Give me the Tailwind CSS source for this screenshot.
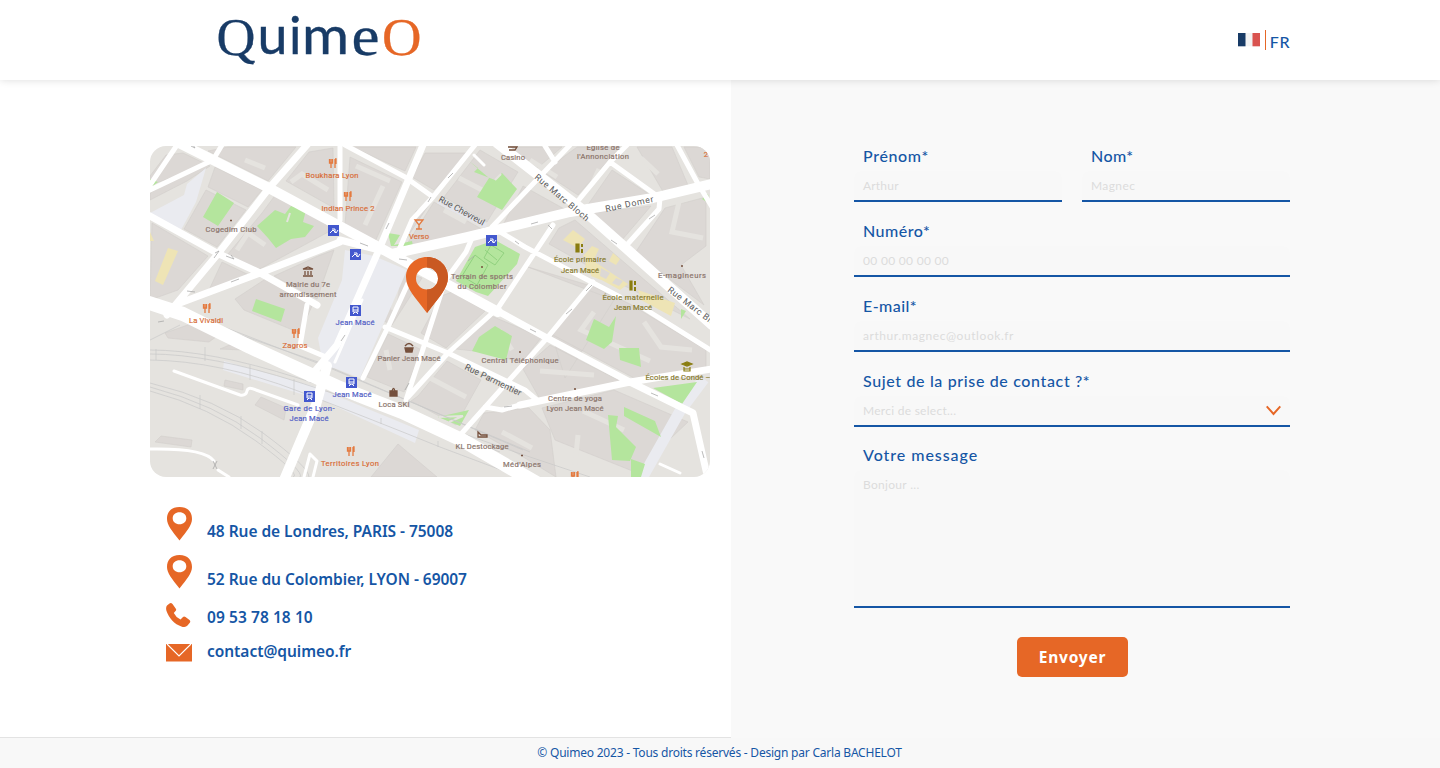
<!DOCTYPE html>
<html lang="fr">
<head>
<meta charset="utf-8">
<title>Quimeo - Contact</title>
<script src="https://cdn.jsdelivr.net/npm/@tailwindcss/browser@4"></script>
</head>
<body class="flex h-[768px] w-[1440px] flex-col overflow-hidden bg-white text-[#1556a5]">
<header class="relative z-10 flex h-20 shrink-0 justify-between bg-white pr-[150px] pl-[210px] shadow-[0_0_8px_rgba(0,0,0,0.14)]">
  <svg class="h-20 w-[220px]" viewBox="210 0 220 80" fill="#183b66" aria-label="QuimeO">
    <g font-family="'Liberation Serif',serif">
      <text x="216.500" y="54.500" font-size="53" textLength="39" lengthAdjust="spacingAndGlyphs" stroke="#183b66" stroke-width=".3">Q</text>
      <text x="351.500" y="54.500" font-size="57" textLength="28" lengthAdjust="spacingAndGlyphs" stroke="#183b66" stroke-width=".3">e</text>
      <text x="382" y="54.500" font-size="53" textLength="39.500" lengthAdjust="spacingAndGlyphs" fill="#e66726" stroke="#e66726" stroke-width=".3">O</text>
    </g>
    <path fill="none" stroke="#183b66" stroke-width="1.600" stroke-linecap="round" d="M243 59.500Q247 63.300 253 63.600"/>
    <g font-family="Lato,sans-serif" font-size="52" stroke="#183b66" stroke-width=".4">
      <text x="257.500" y="54" textLength="30" lengthAdjust="spacingAndGlyphs">u</text>
      <text x="289" y="54">i</text>
      <text x="302" y="54" textLength="47" lengthAdjust="spacingAndGlyphs">m</text>
    </g>
  </svg>
  <div class="flex items-start pt-[30px]">
    <svg class="mt-[3px] h-[14px] w-[22px]" viewBox="0 0 22 14"><rect width="22" height="13.300" fill="#f3f3f3"/><rect width="7.500" height="13.300" fill="#183b66"/><rect x="14.500" width="7.500" height="13.300" fill="#d9534f"/></svg>
    <span class="ml-[5px] h-5 w-px bg-[#e66726]"></span>
    <span class="ml-1 pt-[2px] font-['Lato',sans-serif] text-base leading-5 font-medium tracking-[0.5px]">FR</span>
  </div>
</header>

<main class="grid min-h-0 flex-1 grid-cols-[731px_1fr]">
  <section class="border-b border-[#e3e3e3] pt-[66px] pl-[150px]">
    <svg class="block h-[331px] w-[560px] rounded-2xl" viewBox="150 146 560 331" fill="none">
      <rect x="150" y="146" width="560" height="331" fill="#e5e3df"/>
      <!-- building blocks -->
      <g fill="#dcd8d5" stroke="#d2cecb" stroke-width=".6">
        <path d="M183 153L210 166L187 181L150 200V193L177 176L150 185V176L166 155ZM228 147H296L268 181L208 151ZM215 167L262 190L248 207L208 187ZM206 190L246 210L217 247L184 229ZM279 190L332 218V230L258 270L228 254L262 213ZM286 181L309 152L333 148L334 208ZM152 223L208 256L178 290L150 300ZM222 262L249 275L209 290ZM267 278L312 306L300 333L244 310L235 299ZM318 256L334 250L317 299L274 276Z"/>
        <path d="M350 157L402 182L374 244L345 225ZM352 147H416L405 171ZM425 153H469L434 190L412 177ZM434 202L485 231L405 247ZM416 211L430 203L400 248ZM480 150L518 172L487 222L444 197ZM505 147H562L534 171ZM523 186L568 211L501 229ZM577 147H620L578 195L543 172ZM612 170L652 196L585 209ZM637 147H672L690 190L665 195ZM684 147H710V179L699 177ZM591 213L651 206L622 240ZM665 208L706 197V246L681 265L704 305L635 253Z"/>
        <path d="M559 228L575 220L690 319L617 282L549 244ZM528 267L614 300L565 378L551 332L588 285ZM405 272L422 278L392 325L382 320ZM452 292L485 311L446 348L421 333L441 296ZM388 334L422 350L404 392L367 377ZM418 396L447 361L481 380L456 425L411 401ZM489 315L520 328L541 338L521 363L492 353L456 349ZM561 321L592 286L630 304L706 350V369L634 378L551 334ZM523 369L550 345L622 382L541 401ZM542 408L614 390L688 422L635 472L555 440ZM529 408L550 430L556 477L520 455L475 430L484 413ZM165 333L199 321L224 331L209 342L168 338ZM232 344L243 350L220 349ZM225 380L243 384V390L224 386ZM261 397L286 408L284 420L255 405ZM155 442L161 436L192 440L191 447ZM371 477L398 444L437 477Z"/>
      </g>
      <g stroke="#e5e3df" stroke-width="5">
        <path d="M245 160L265 168M285 198L320 216M291 182L302 174L328 190M237 250L248 233L265 245M356 166L390 181M365 225L383 186M459 178L484 191M444 210L466 222M530 160L557 177M599 169L588 193M641 158L658 174M679 202L672 232L703 238M386 350L390 370M430 378L466 397M499 330L512 350M594 312L581 330L650 361M644 322L661 347L692 350M583 411L624 430M578 435L575 465M502 432L532 448M540 371L594 375M397 284L393 310"/>
      </g>
      <g fill="#eaebf0">
        <path d="M206 168L187 184L184 195L150 213L181 230L196 202ZM345 250L374 256L407 270L360 378L334 368L324 370L318 338L342 280ZM224 361L316 387L356 404L419 430L415 443L324 401L223 370Z"/>
        <path d="M704 379L680 411L641 480" stroke="#eaebf0" stroke-width="11"/>
      </g>
      <!-- parks -->
      <g fill="#b4e59d">
        <path d="M217 192L234 203L218 226L203 217ZM257 226L275 210L285 214L291 206L306 210L303 222L314 226L305 237L291 239L276 248L268 238ZM150 179L158 182L150 188ZM256 299L285 309L281 322L252 311ZM469 161L478 168L474 172L495 180L502 173L517 189L502 210L477 197L489 178ZM475 247L495 240L520 254L517 264L488 296L476 292L456 281ZM495 326L512 336L506 360L472 351L479 337ZM438 417L469 410L460 426ZM594 319L609 327L616 316L612 342L604 349L586 340ZM619 348L639 348L641 367L620 360ZM653 388L697 382L682 404ZM624 407L655 421L661 437L624 416ZM608 415L618 416L616 427L636 447L630 461L612 460ZM631 459L645 464L641 477H631ZM388 233L400 235L394 245L412 241L413 246L391 246Z"/>
        <path d="M686 311L681 319L681 309ZM708 194L702 199L710 204Z"/>
      </g>
      <path d="M475 255L488 265L477 285L462 276ZM491 245L504 253L495 265L484 258ZM485 250L497 260" stroke="#91d17f"/>
      <path d="M290 213L287 222M501 174L495 180M439 417L463 416L449 422" stroke="#e5e3df" stroke-width="2"/>
      <path d="M168 248L178 251L163 285L155 281ZM150 232L154 241H150ZM573 230L585 239L578 248L563 240ZM592 246L599 249L593 261L583 256ZM613 253L620 259L616 265L609 261ZM586 256L628 284L620 290L585 271ZM638 290L675 303L671 316L641 300ZM594 266L604 270L601 280L591 276Z" fill="#eee4b5"/>
      <path d="M601 268L610 273L606 279L600 276ZM616 278L623 281L619 286L612 283Z" fill="#dcd8d5"/>
      <!-- railway tracks -->
      <g stroke="#c9c9c9" stroke-width=".7">
        <path d="M150 350Q210 350 298 378T515 452L590 477M150 354Q210 354 298 382T500 452M150 360Q220 361 298 391T440 447L520 477M150 387Q215 404 260 438T300 477M150 391Q210 407 256 441T293 477M150 383Q217 399 263 433T309 477M160 307L318 362L523 450M167 305L325 366L530 452M150 340L180 325"/>
        <path d="M205 347V361M250 365V380M294 379V395M156 349V360M200 395V409M241 416V429M262 431V444M381 418V424M438 441V447"/>
      </g>
      <!-- streets -->
      <g stroke="#fff" stroke-linejoin="round" stroke-linecap="round">
        <path stroke-width="5" d="M150 190L213 160L222 145M150 185L177 145M340 145V220M433 197L412 220L398 252M475 145L433 197M345 145L405 177L433 197M492 227L525 247L620 297M645 309L712 351M570 145L492 227M553 225L498 308L448 353L408 397M472 238L466 252L445 281L425 343L406 400M415 268L388 327L363 378M385 327L448 353L525 390L537 400M593 282L547 338L462 433M485 407L502 410L520 405M677 145L697 182L712 207M627 145L610 162L660 198L659 209L625 247M610 162L577 202M307 305L300 346L326 357M545 146L555 162"/>
        <path stroke-width="3" d="M174 371L240 395Q246 396 247 391T256 390L298 405M150 449Q205 448 214 461M218 470L229 477M304 477L310 454L317 461L313 477M660 464L680 473M362 300L335 362M474 155L484 165"/>
        <path stroke-width="7" d="M307 145L270 187L217 255L167 315M150 216L217 253L260 273L317 305M340 242L260 273L180 303M340 240L395 254M423 145L378 252L337 345L309 378M492 308L547 338L630 382L693 413L707 475M520 405L630 382L712 369"/>
        <path stroke-width="10" d="M179 143L267 187L395 256L498 312M497 143L583 210L637 258L712 325M392 254L468 237L570 212L653 198L712 184M327 366L316 405L301 440L284 480"/>
        <path stroke-width="14" d="M140 300L183 314L250 347L340 388L402 412L462 440L540 485"/>
      </g>
      <path d="M438 201L486 226" stroke="#e4e5eb" stroke-width="5"/>
      <g stroke="#aaa" stroke-width=".8">
        <path d="M191 146L195 148L193 145M214 258L219 251L215 253M226 256L234 259L231 255M231 282L239 279M187 291L195 292M428 202L431 197M448 178L453 173M386 229L389 223M368 246L360 243M407 260L399 259M468 261L474 256M515 241L519 244M531 224L538 222M548 225L552 229M611 240L617 244M649 219L655 215M586 291L592 285M566 314L572 309M530 329L536 332M651 393L658 396M702 451L704 458M504 407L512 406M405 390L409 383M341 341L345 335M158 322L164 321M213 461L217 469M217 461L213 469"/>
      </g>
      <!-- place icons -->
      <g fill="#4358ce"><path d="M328 225H339V236H328ZM350 249H361V260H350ZM486 235H497V246H486ZM350 305H361V316H350ZM346 377H357V388H346ZM304 391H315V402H304Z"/></g>
      <g stroke="#fff" stroke-width="1"><path id="bike" d="M330 233L333 230L336 233L338 230M332 229H335V233"/><use href="#bike" x="22" y="24"/><use href="#bike" x="158" y="10"/><path id="train" d="M353 307H358V312H353ZM353 310H358M353 314L355 312M358 314L356 312"/><use href="#train" x="-4" y="72"/><use href="#train" x="-46" y="86"/></g>
      <g stroke="#e47a3f" stroke-width="1.300"><path id="fork" d="M329.500 159V163H332.500V159M331 159V168M335 159V168M335 159H336V164"/><use href="#fork" x="15" y="33"/><use href="#fork" x="-126" y="145"/><use href="#fork" x="-37" y="170"/><use href="#fork" x="18" y="288"/><use href="#fork" x="242" y="313"/><path d="M415 220H423L419 225ZM419 225V229M416 229H422"/></g>
      <g stroke="#75503d" stroke-width="1.300"><path d="M303 269L308 267L313 269ZM305 271V275M308 271V275M311 271V275M303 276H313M508 147H517L515 150H509M478 432L481 435H487V437H478ZM230 220.500H232M481 267H483M519 352H521M574 389H576M521 455.500H523M681 266H683"/><path fill="#75503d" d="M405 348H413L412 352H406ZM390 391H397V396H390Z"/><path d="M405 346Q409 341 413 346M392 391Q393.500 386 395 391"/></g>
      <g stroke="#8a7d10" stroke-width="1.200"><path fill="#8a7d10" d="M576 244H579V252H576ZM630 281H632V290H630ZM682 364L687 362L692 364L687 366Z"/><path stroke-width="2" d="M582 244V247M582 249V253M635 281V285M635 287V291"/><path d="M684 367V371H690V367M684 369H690"/></g>
      <!-- place names -->
      <g font-family="Roboto,sans-serif" font-size="7.600" text-anchor="middle" stroke-width=".2">
        <g fill="#d9703c" stroke="#d9703c"><text x="332" y="178" textLength="53">Boukhara Lyon</text><text x="348" y="211" textLength="53">Indian Prince 2</text><text x="419" y="239" textLength="20">Verso</text><text x="206" y="323" textLength="34">La Vivaldi</text><text x="295" y="348" textLength="25">Zagros</text><text x="350" y="466" textLength="58">Territoires Lyon</text><text x="706" y="157">2</text></g>
        <g fill="#8d776e" stroke="#8d776e"><text x="231" y="231.500" textLength="51">Cogedim Club</text><text x="308" y="287" textLength="44">Mairie du 7e</text><text x="308" y="296.500" textLength="57">arrondissement</text><text x="513" y="160" textLength="24">Casino</text><text x="603" y="150" textLength="33">Église de</text><text x="603" y="159" textLength="52">l'Annonciation</text><text x="482" y="278.500" textLength="62">Terrain de sports</text><text x="482" y="288.500" textLength="49">du Colombier</text><text x="682" y="277.500" textLength="48">E-magineurs</text><text x="409" y="361" textLength="63">Panier Jean Macé</text><text x="394" y="406.500" textLength="31">Loca SKI</text><text x="520" y="363" textLength="77">Central Téléphonique</text><text x="575" y="400.500" textLength="54">Centre de yoga</text><text x="575" y="410.500" textLength="57">Lyon Jean Macé</text><text x="482" y="448.500" textLength="53">KL Destockage</text><text x="522" y="467" textLength="38">Méd'Alpes</text></g>
        <g fill="#8a7d32" stroke="#8a7d32"><text x="580" y="262" textLength="52">École primaire</text><text x="580" y="272.500" textLength="38">Jean Macé</text><text x="633" y="299.500" textLength="61">École maternelle</text><text x="633" y="309.500" textLength="38">Jean Macé</text><text x="678" y="380" textLength="65">Écoles de Condé –</text></g>
        <g fill="#5361c6" stroke="#5361c6"><text x="355" y="324.500" textLength="39">Jean Macé</text><text x="352" y="397" textLength="39">Jean Macé</text><text x="309" y="410.500" textLength="51">Gare de Lyon-</text><text x="309" y="420.500" textLength="39">Jean Macé</text></g>
      </g>
      <g font-family="Roboto,sans-serif" font-size="8.800" fill="#5a5a5a">
        <text transform="translate(438 201) rotate(29)" textLength="51">Rue Chevreul</text>
        <text transform="translate(534 178) rotate(40)" textLength="68">Rue Marc Bloch</text>
        <text transform="translate(606 212) rotate(-12)" textLength="49">Rue Domer</text>
        <text transform="translate(667 291) rotate(37)" textLength="68">Rue Marc Bloch</text>
        <text transform="translate(464 369) rotate(26)" textLength="62">Rue Parmentier</text>
      </g>
      <!-- location marker -->
      <path fill="#e66726" fill-rule="evenodd" d="M427 257C415 257 406 266 406 277C406 289 416 298 427 313C438 298 448 289 448 277C448 266 439 257 427 257ZM427 267.500a11 11 0 1 1 0 22a11 11 0 1 1 0-22Z"/>
      <path fill="#c95922" d="M427 257C439 257 448 266 448 277C448 289 438 298 427 313V289.500a11 11 0 0 0 0-22Z"/>
    </svg>

    <ul class="mt-[30px] ml-4 flex flex-col font-['Noto_Sans',sans-serif] text-[15.5px] leading-6 font-semibold">
      <li class="flex h-12 gap-[15px]">
        <svg class="h-[34px] w-[26px]" viewBox="0 0 26 34"><path fill="#e66726" fill-rule="evenodd" d="M13.500 0C5 0 1 5 1 12C1 18 6 24 13.500 33.500C21 24 26 18 26 12C26 5 22 0 13.500 0ZM13.500 5.200c4 0 6.800 2.500 6.800 6s-2.800 6-6.800 6s-6.800-2.500-6.800-6s2.800-6 6.800-6Z"/></svg>
        <span class="pt-3 tracking-[-0.04px] whitespace-nowrap">48 Rue de Londres, PARIS - 75008</span>
      </li>
      <li class="flex h-12 gap-[15px]">
        <svg class="h-[34px] w-[26px]" viewBox="0 0 26 34"><path fill="#e66726" fill-rule="evenodd" d="M13.500 0C5 0 1 5 1 12C1 18 6 24 13.500 33.500C21 24 26 18 26 12C26 5 22 0 13.500 0ZM13.500 5.200c4 0 6.800 2.500 6.800 6s-2.800 6-6.800 6s-6.800-2.500-6.800-6s2.800-6 6.800-6Z"/></svg>
        <span class="pt-3 tracking-[-0.04px] whitespace-nowrap">52 Rue du Colombier, LYON - 69007</span>
      </li>
      <li class="flex h-[37px] gap-[15px]">
        <svg class="h-6 w-[26px]" viewBox="0 0 26 24"><path fill="#e66726" d="M1 2.500L3.500 .5Q5 -.5 6.500 1L10 6Q10.500 7 9.500 8L7.800 10Q10 14.500 14.500 16.500L17 14Q18 13 19.500 14L23.500 17Q24.700 18 24 19.500L21.500 22.500Q19.500 24.600 16 23.800C8 21 3 15 .5 8Q-.5 4.500 1 2.500Z"/></svg>
        <span class="pt-[2px] tracking-[0.07px] whitespace-nowrap">09 53 78 18 10</span>
      </li>
      <li class="flex gap-[15px]">
        <svg class="mt-1 h-[18px] w-[26px]" viewBox="0 0 26 18"><path fill="#e66726" d="M0 0H26V17.500H0Z"/><path fill="none" stroke="#fff" stroke-width="1.200" d="M1 0L13 12L25 0"/></svg>
        <span class="leading-[22px] tracking-[-0.04px] whitespace-nowrap">contact@quimeo.fr</span>
      </li>
    </ul>
  </section>

  <section class="bg-[#f9f9f9] pt-[65px] pr-[150px] pl-[123px]">
    <form class="flex flex-col font-['Lato',sans-serif] text-base">
      <div class="grid grid-cols-2 gap-5">
        <div class="flex flex-col">
          <label class="h-[26px] pl-[9px] leading-[21px] font-medium tracking-[0.65px]">Prénom*</label>
          <div class="h-[31px] rounded-t-lg border-b-2 border-[#1556a5] bg-[#f8f8f8] pl-[9px] text-xs leading-[29px] tracking-[0.2px] text-[#dcdcdc]">Arthur</div>
        </div>
        <div class="flex flex-col">
          <label class="h-[26px] pl-[9px] leading-[21px] font-medium tracking-[0.4px]">Nom*</label>
          <div class="h-[31px] rounded-t-lg border-b-2 border-[#1556a5] bg-[#f8f8f8] pl-[9px] text-xs leading-[29px] tracking-[0.4px] text-[#dcdcdc]">Magnec</div>
        </div>
      </div>
      <div class="mt-[18px] flex flex-col">
        <label class="h-[26px] pl-[9px] leading-[21px] font-medium tracking-[0.5px]">Numéro*</label>
        <div class="h-[31px] rounded-t-lg border-b-2 border-[#1556a5] bg-[#f8f8f8] pl-[9px] text-xs leading-[29px] tracking-[0.3px] text-[#dcdcdc]">00 00 00 00 00</div>
      </div>
      <div class="mt-[18px] flex flex-col">
        <label class="h-[26px] pl-[9px] leading-[21px] font-medium tracking-[0.45px]">E-mail*</label>
        <div class="h-[31px] rounded-t-lg border-b-2 border-[#1556a5] bg-[#f8f8f8] pl-[9px] text-xs leading-[29px] tracking-[0.57px] text-[#dcdcdc]">arthur.magnec@outlook.fr</div>
      </div>
      <div class="mt-[18px] flex flex-col">
        <label class="h-[26px] pl-[9px] leading-[21px] font-medium tracking-[0.64px]">Sujet de la prise de contact ?*</label>
        <div class="flex h-[31px] items-start justify-between rounded-t-lg border-b-2 border-[#1556a5] bg-[#f8f8f8] pr-[9px] pl-[9px] text-xs leading-[29px] tracking-[0.27px] text-[#dcdcdc]"><span>Merci de select...</span>
          <svg class="mt-[9px] h-[11px] w-[15px]" viewBox="0 0 15 11"><path fill="none" stroke="#e66726" stroke-width="2" d="M.7 1.300L7.500 8.900L14.300 1.300"/></svg>
        </div>
      </div>
      <div class="mt-[17px] flex flex-col">
        <label class="h-[26px] pl-[9px] leading-[21px] font-medium tracking-[0.95px]">Votre message</label>
        <div class="h-[138px] rounded-t-lg border-b-2 border-[#1556a5] bg-[#f8f8f8] pl-[9px] text-xs leading-[29px] tracking-[0.3px] text-[#dcdcdc]">Bonjour ...</div>
      </div>
      <div class="mt-[29px] flex h-10 w-[111px] items-center justify-center self-center rounded-[5px] bg-[#e66726] pt-[2px] pl-px font-['Noto_Sans',sans-serif] text-[15.5px] font-bold tracking-[0.8px] text-white">Envoyer</div>
    </form>
  </section>
</main>
<footer class="flex h-[30px] shrink-0 items-center justify-center bg-[#f8f8f8] pr-px font-['Noto_Sans',sans-serif] text-xs tracking-[-0.22px] whitespace-nowrap">© Quimeo 2023 - Tous droits réservés - Design par Carla BACHELOT</footer>
</body>
</html>
